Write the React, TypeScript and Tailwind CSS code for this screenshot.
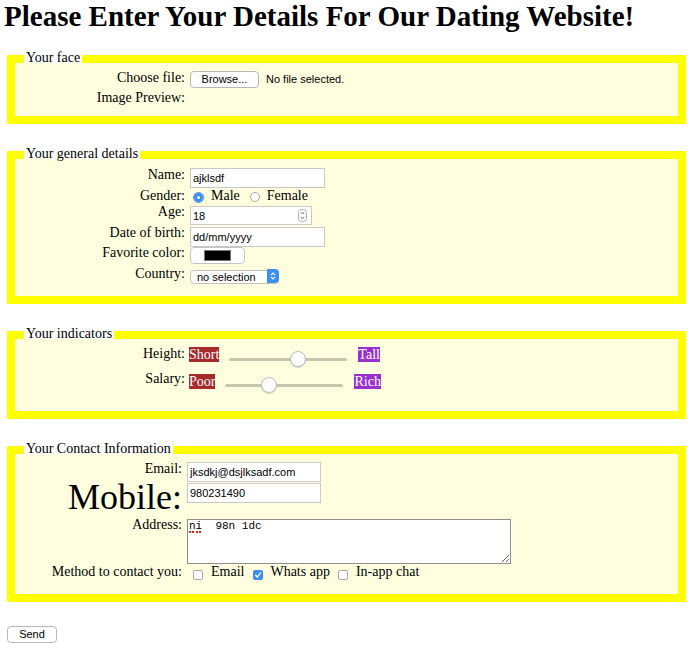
import type { ReactNode } from 'react';

const sans = "font-['Liberation_Sans',Arial,sans-serif]";

function Fieldset({ legend, className, children }: { legend: string; className: string; children: ReactNode }) {
  return (
    <fieldset className={`ml-[7px] w-[679px] border-8 border-[#ffff00] bg-[#ffffe0] px-[9px] ${className}`}>
      <legend className="bg-[linear-gradient(#fff_14px,transparent_14px)] px-[2px] pt-[1px] pb-[2px] leading-[16px]">{legend}</legend>
      {children}
    </fieldset>
  );
}

function Label({ children, className = 'w-[161px]' }: { children: ReactNode; className?: string }) {
  return <span className={`shrink-0 pt-[1px] text-right leading-[16px] ${className}`}>{children}</span>;
}

function Check({ checked }: { checked?: boolean }) {
  return (
    <span className="relative mt-[7px] inline-flex size-[10px] shrink-0">
      <input
        type="checkbox"
        defaultChecked={checked}
        className="peer size-[10px] appearance-none rounded-[2px] border border-[#a9a9a9] bg-white checked:border-[#3b8ff6] checked:bg-[#3b8ff6]"
      />
      <svg viewBox="0 0 10 10" className="pointer-events-none absolute inset-0 hidden size-[10px] peer-checked:block">
        <path d="M2.6 5.3 4.3 7.1 7.5 2.9" fill="none" stroke="#fff" strokeWidth="1.4" strokeLinecap="round" strokeLinejoin="round" />
      </svg>
    </span>
  );
}

const slider =
  'h-[16px] w-[118px] appearance-none bg-transparent [&::-webkit-slider-runnable-track]:h-[3px] [&::-webkit-slider-runnable-track]:rounded-full [&::-webkit-slider-runnable-track]:bg-[#c8c5ad] [&::-webkit-slider-thumb]:mt-[-6.5px] [&::-webkit-slider-thumb]:size-[16px] [&::-webkit-slider-thumb]:appearance-none [&::-webkit-slider-thumb]:rounded-full [&::-webkit-slider-thumb]:border [&::-webkit-slider-thumb]:border-[#bdbdbd] [&::-webkit-slider-thumb]:bg-white [&::-webkit-slider-thumb]:shadow-[0_1px_1px_rgba(0,0,0,0.15)]';

const textInput = `h-[20px] border border-[#c9c9c9] bg-white px-[2px] text-[11px] text-black outline-none ${sans}`;

export default function App() {
  return (
    <div className="min-h-screen bg-white pb-[10px] font-['Liberation_Serif','Times_New_Roman',serif] text-[14px] leading-[16px] text-black">
      <h1 className="pl-[4px] text-[29px] leading-[32px] font-bold">Please Enter Your Details For Our Dating Website!</h1>

      <form onSubmit={(e) => e.preventDefault()}>
        {/* Face */}
        <Fieldset legend="Your face" className="mt-[17px] pt-[1px] pb-[11px]">
          <div className="flex h-[20px] items-start">
            <Label>Choose file:</Label>
            <button type="button" className={`ml-[5px] mt-[2px] h-[17px] w-[69px] rounded-[4px] border border-[#b8b8b8] bg-white text-[11px] leading-[15px] ${sans}`}>
              Browse...
            </button>
            <span className={`ml-[7px] mt-[2px] text-[11px] leading-[17px] ${sans}`}>No file selected.</span>
          </div>
          <div className="flex h-[16px] items-start">
            <Label>Image Preview:</Label>
          </div>
        </Fieldset>

        {/* General details */}
        <Fieldset legend="Your general details" className="mt-[21px] pt-[2px] pb-[12px]">
          <div className="flex h-[21px] items-start">
            <Label>Name:</Label>
            <input defaultValue="ajklsdf" className={`ml-[5px] mt-[2px] w-[135px] ${textInput}`} />
          </div>
          <div className="flex h-[16px] items-start">
            <Label>Gender:</Label>
            <input
              type="radio"
              name="gender"
              defaultChecked
              className="ml-[8px] mt-[5px] size-[11px] shrink-0 appearance-none rounded-full border border-[#a9a9a9] bg-white checked:border-[#3b8ff6] checked:shadow-[inset_0_0_0_3px_#3b8ff6]"
            />
            <span className="ml-[7px] pt-[1px]">Male</span>
            <input
              type="radio"
              name="gender"
              className="ml-[10px] mt-[5px] size-[10px] shrink-0 appearance-none rounded-full border border-[#a9a9a9] bg-white checked:border-[#3b8ff6] checked:shadow-[inset_0_0_0_3px_#3b8ff6]"
            />
            <span className="ml-[7px] pt-[1px]">Female</span>
          </div>
          <div className="flex h-[21px] items-start">
            <Label>Age:</Label>
            <div className="ml-[5px] mt-[3px] flex h-[19px] w-[122px] items-center border border-[#c9c9c9] bg-white">
              <input defaultValue="18" className={`h-full min-w-0 flex-1 px-[2px] text-[11px] text-black outline-none ${sans}`} />
              <svg viewBox="0 0 9 13" className="mr-[4px] h-[13px] w-[9px] shrink-0">
                <rect x="0.5" y="0.5" width="8" height="12" rx="3" fill="#fff" stroke="#b0b0b0" />
                <path d="M2.8 5 4.5 3.3 6.2 5M2.8 8 4.5 9.7 6.2 8" fill="none" stroke="#555" strokeWidth="0.9" />
              </svg>
            </div>
          </div>
          <div className="flex h-[20px] items-start">
            <Label>Date of birth:</Label>
            <input defaultValue="dd/mm/yyyy" className={`ml-[5px] mt-[3px] w-[135px] ${textInput}`} />
          </div>
          <div className="flex h-[21px] items-start">
            <Label>Favorite color:</Label>
            <button type="button" className="ml-[5px] mt-[3px] flex h-[17px] w-[55px] items-center justify-center rounded-[4px] border border-[#c4c4c4] bg-white">
              <span className="h-[11px] w-[27px] border border-[#777] bg-black" />
            </button>
          </div>
          <div className="flex h-[19px] items-start">
            <Label>Country:</Label>
            <div className="relative ml-[5px] mt-[4px] h-[14px] w-[89px]">
              <select className={`h-full w-full appearance-none rounded-[4px] border border-[#c2c2c2] bg-white pl-[6px] text-[11px] leading-[12px] text-black outline-none ${sans}`}>
                <option>no selection</option>
              </select>
              <span className="pointer-events-none absolute right-0 top-0 flex h-[14px] w-[12px] items-center justify-center rounded-r-[4px] bg-[#3b8ff6]">
                <svg viewBox="0 0 8 10" className="h-[10px] w-[8px]">
                  <path d="M2 4 4 2 6 4M2 6 4 8 6 6" fill="none" stroke="#fff" strokeWidth="1.1" />
                </svg>
              </span>
            </div>
          </div>
        </Fieldset>

        {/* Indicators */}
        <Fieldset legend="Your indicators" className="mt-[21px] pt-[1px] pb-[16px]">
          <div className="flex h-[25px] items-start">
            <Label>Height:</Label>
            <span className="ml-[4px] mt-[2px] bg-[#a52a2a] leading-[15px] text-white">Short</span>
            <input type="range" defaultValue={59} className={`ml-[10px] mt-[6px] ${slider}`} />
            <span className="ml-[11px] mt-[2px] bg-[#9932cc] leading-[15px] text-white">Tall</span>
          </div>
          <div className="flex h-[25px] items-start">
            <Label>Salary:</Label>
            <span className="ml-[4px] mt-[4px] bg-[#a52a2a] leading-[15px] text-white">Poor</span>
            <input type="range" defaultValue={35} className={`ml-[10px] mt-[7px] ${slider}`} />
            <span className="ml-[11px] mt-[4px] bg-[#9932cc] leading-[15px] text-white">Rich</span>
          </div>
        </Fieldset>

        {/* Contact */}
        <Fieldset legend="Your Contact Information" className="mt-[21px] pt-[1px] pb-[15px]">
          <div className="flex h-[23px] items-start">
            <Label className="w-[158px]">Email:</Label>
            <input defaultValue="jksdkj@dsjlksadf.com" className={`ml-[5px] mt-[2px] w-[134px] ${textInput}`} />
          </div>
          <div className="flex h-[33px] items-start">
            <Label className="-mt-[7px] w-[158px] text-[36px] leading-[40px]">Mobile:</Label>
            <input defaultValue="980231490" className={`ml-[5px] w-[134px] ${textInput}`} />
          </div>
          <div className="flex h-[47px] items-start">
            <Label className="w-[158px]">Address:</Label>
            <div className="relative ml-[5px] mt-[3px]">
              <textarea
                defaultValue="ni  98n 1dc"
                spellCheck={false}
                className="block h-[45px] w-[324px] border border-[#8f8f8f] bg-white px-[1px] font-['Liberation_Mono','Courier_New',monospace] text-[11px] leading-[13px] text-black outline-none"
              />
              <span className="pointer-events-none absolute left-[2px] top-[12px] w-[12px] border-b-2 border-dotted border-[#e0241b]" />
            </div>
          </div>
          <div className="flex h-[16px] items-start">
            <Label className="w-[158px]">Method to contact you:</Label>
            <span className="ml-[11px] flex">
              <Check />
            </span>
            <span className="ml-[8px] pt-[1px]">Email</span>
            <span className="ml-[9px] flex">
              <Check checked />
            </span>
            <span className="ml-[7px] pt-[1px]">Whats app</span>
            <span className="ml-[8px] flex">
              <Check />
            </span>
            <span className="ml-[8px] pt-[1px]">In-app chat</span>
          </div>
        </Fieldset>

        <button type="submit" className={`ml-[7px] mt-[24px] h-[17px] w-[50px] rounded-[4px] border border-[#b8b8b8] bg-white text-[11px] leading-[15px] text-black ${sans}`}>
          Send
        </button>
      </form>
    </div>
  );
}
